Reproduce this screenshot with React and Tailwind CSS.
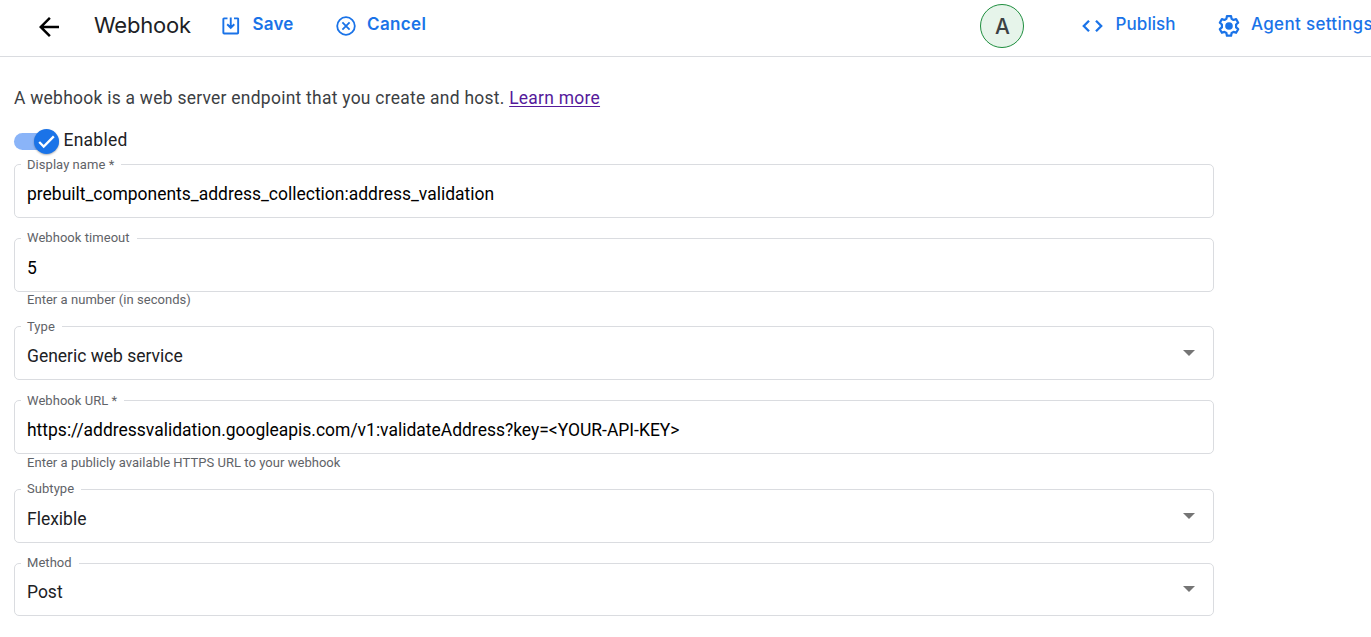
function Header() {
  return (
    <header className="flex h-[57px] shrink-0 items-center overflow-hidden whitespace-nowrap border-b border-[#dadce0] font-['Inter',sans-serif] text-[17px] text-[#1a73e8]">
      <svg className="mt-[-2px] ml-[34px] size-[30px] shrink-0" viewBox="0 0 24 24" fill="#000">
        <path d="M20 11H7.83l5.59-5.59L12 4l-8 8 8 8 1.41-1.41L7.83 13H20v-2z" />
      </svg>
      <h1 className="mt-[-6px] ml-[30px] w-[128px] shrink-0 text-[22px] leading-7 tracking-[-0.22px] text-[#202124]">
        Webhook
      </h1>
      <svg className="mt-[-4px] size-[18px] shrink-0" viewBox="0 0 18 18" fill="none" stroke="currentColor" strokeWidth="1.9">
        <path d="M5.500 1.350H2.100c-.5 0-.75.3-.75.750v13.600c0 .5.3.75.750.750h13.300c.5 0 .75-.3.750-.750V2.100c0-.5-.3-.75-.750-.750H12M8.750.5v10.200M5.200 7.300l3.550 3.500 3.550-3.500" />
      </svg>
      <span className="mt-[-6px] ml-[12.500px] w-[83px] shrink-0 font-semibold tracking-[0.2px]">Save</span>
      <svg className="mt-[-4px] size-5 shrink-0" viewBox="0 0 20 20" fill="none" stroke="currentColor" strokeWidth="1.8">
        <circle cx="10" cy="10" r="8.800" />
        <path d="M6.400 6.400l7.200 7.200M13.600 6.400l-7.200 7.200" />
      </svg>
      <span className="mt-[-6px] ml-[11.500px] w-[613px] shrink-0 font-semibold tracking-[0.36px]">Cancel</span>
      <div className="mt-[-4px] flex size-11 shrink-0 items-center justify-center rounded-full border border-[#1e8e3e] bg-[#e6f4ea] text-[21px] font-medium text-[#3c4043]">
        <span className="mt-px ml-px">A</span>
      </div>
      <svg className="mt-[-4px] ml-[58px] h-3 w-[21px] shrink-0" viewBox="0 0 21 12" fill="none" stroke="currentColor" strokeWidth="2.300">
        <path d="M7 .8L1.800 6 7 11.200M14 .8L19.200 6 14 11.200" />
      </svg>
      <span className="mt-[-6px] ml-[12.500px] w-[101.500px] shrink-0 font-medium tracking-[0.08px]">Publish</span>
      <svg className="mt-[-4px] size-6 shrink-0" viewBox="0 0 24 24" fill="none" stroke="currentColor" strokeWidth="2.200">
        <path strokeLinejoin="round" d="M9.900 2.200h4.200l.5 2.700 1.900 1.100 2.600-.9 2.100 3.600-2.100 1.800v2.900l2.100 1.800-2.100 3.600-2.600-.9-1.900 1.100-.5 2.700H9.900l-.5-2.700-1.900-1.100-2.600.9-2.100-3.600 2.100-1.800v-2.900L2.800 8.700l2.100-3.600 2.600.9 1.900-1.100z" />
        <circle cx="12" cy="12" r="3.800" fill="currentColor" stroke="none" />
      </svg>
      <span className="mt-[-6px] ml-[10px] shrink-0 font-medium tracking-[0.32px]">Agent settings</span>
    </header>
  );
}

function Field({ label, value, hint, select, height = "h-[54px]", labelTop = "top-[-9px]", hintPad = "" }) {
  return (
    <div>
      <div
        className={`relative flex items-center rounded-[5px] border border-[#dadce0] px-3 text-[17.48px] leading-6 ${
          select ? "text-[#202124]" : "text-black"
        } ${height}`}
      >
        <label className={`absolute left-[6px] bg-white pr-[7px] pl-[6px] text-[13px] leading-4 tracking-[0.05px] text-[#5f6368] ${labelTop}`}>
          {label}
        </label>
        <span className="flex-1 pt-[5px]">{value}</span>
        {select && (
          <svg className="mt-[-1px] mr-[6px] h-[6px] w-3" viewBox="0 0 12 6" fill="#757575">
            <path d="M0 0h12L6 6z" />
          </svg>
        )}
      </div>
      {hint && (
        <p className={`h-0 pl-[13px] text-[13px] leading-4 tracking-[0.04px] text-[#5f6368] ${hintPad}`}>
          {hint}
        </p>
      )}
    </div>
  );
}

export default function App() {
  return (
    <div className="flex h-[637px] w-full flex-col overflow-hidden bg-white font-['Roboto',sans-serif]">
      <Header />
      <main className="w-[1214px] pl-[14px]">
        <p className="mt-[29px] text-[17.45px] leading-6 tracking-[0.265px] text-[#3c4043]">
          A webhook is a web server endpoint that you create and host.{" "}
          <a className="text-[#551a9b] underline underline-offset-2">Learn more</a>
        </p>
        <div className="mt-[18px] flex h-[26px] items-center">
          <div className="flex h-[17px] w-[45px] items-center justify-end rounded-full bg-[#8ab4f8]">
            <div className="flex size-[25px] shrink-0 items-center justify-center rounded-full bg-[#1a73e8] shadow-[0_1px_2px_rgba(0,0,0,0.3)]">
              <svg className="size-[17px]" viewBox="0 0 17 17" fill="none" stroke="#fff" strokeWidth="2.300">
                <path d="M1.200 9l4.500 4.500L15.800 3.400" />
              </svg>
            </div>
          </div>
          <span className="mt-[-2px] ml-[4.500px] text-[17.45px] leading-6 tracking-[0.27px] text-[#202124]">Enabled</span>
        </div>
        <div className="mt-[10px] flex flex-col">
          <Field label="Display name *" value="prebuilt_components_address_collection:address_validation" labelTop="top-[-8px]" />
          <div className="h-5" />
          <Field label="Webhook timeout" value="5" hint="Enter a number (in seconds)" />
          <div className="h-[34px]" />
          <Field label="Type" value="Generic web service" select labelTop="top-[-8px]" />
          <div className="h-5" />
          <Field
            label="Webhook URL *"
            value="https://addressvalidation.googleapis.com/v1:validateAddress?key=<YOUR-API-KEY>"
            hint="Enter a publicly available HTTPS URL to your webhook"
            labelTop="top-[-8px]"
            hintPad="pt-px"
          />
          <div className="h-[34px]" />
          <Field label="Subtype" value="Flexible" select />
          <div className="h-5" />
          <Field label="Method" value="Post" select height="h-[53px]" />
        </div>
      </main>
    </div>
  );
}
